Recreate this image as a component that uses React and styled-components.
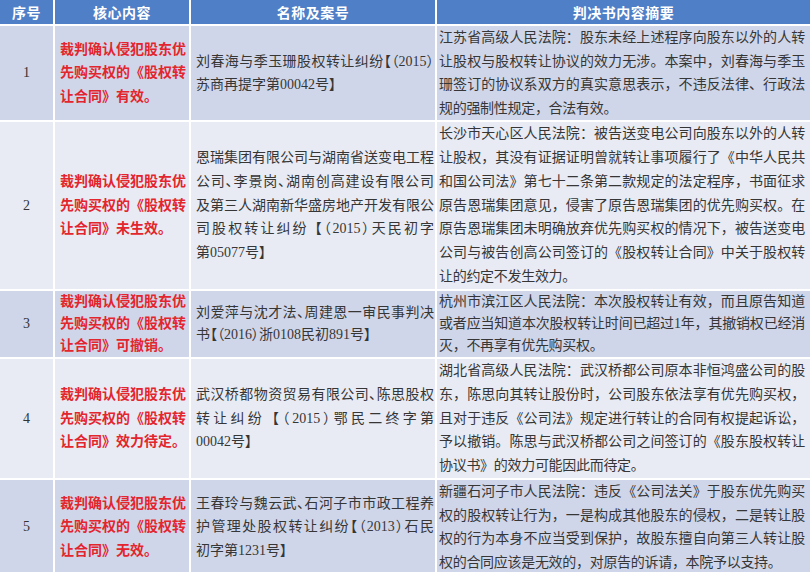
import React from 'react';
import styled, { createGlobalStyle } from 'styled-components';

const GlobalStyle = createGlobalStyle`
  html, body { margin: 0; padding: 0; background: #ffffff; }
  body { width: 810px; height: 572px; overflow: hidden; }
`;

const FONT = `"Liberation Serif", "Noto Sans CJK SC", serif`;

const Table = styled.div`
  width: 810px;
  height: 572px;
  display: flex;
  flex-direction: column;
  gap: 2px;
  background: #ffffff;
  font-family: ${FONT};
  overflow: hidden;
`;

const Row = styled.div`
  flex: none;
  display: grid;
  grid-template-columns: 53px 134px 244px 1fr;
  column-gap: 2px;
  height: ${(p) => p.$h}px;
`;

const HeadCell = styled.div`
  background: #4f7fc6;
  color: #ffffff;
  font-family: "Noto Sans CJK SC", sans-serif;
  font-weight: 700;
  font-size: 14px;
  letter-spacing: 0.5px;
  display: flex;
  align-items: center;
  justify-content: center;
`;

const Cell = styled.div`
  background: ${(p) => (p.$band ? '#d0d6ea' : '#e8ebf4')};
  display: flex;
  align-items: center;
  min-width: 0;
`;

const NumCell = styled(Cell)`
  justify-content: center;
  font-size: 14px;
  color: #333333;
`;

const CoreCell = styled(Cell)`
  padding-left: 5px;
`;

const NameCell = styled(Cell)`
  padding-left: 5px;
`;

const SummaryCell = styled(Cell)`
  padding-left: 2px;
`;

const Lines = styled.div`
  width: ${(p) => p.$w}px;
  font-size: 14px;
  line-height: ${(p) => p.$lh}px;
  color: ${(p) => (p.$red ? '#e3252d' : '#363636')};
  font-weight: ${(p) => (p.$red ? 700 : 400)};
  font-feature-settings: ${(p) => (p.$palt ? '"palt"' : 'normal')};
  letter-spacing: ${(p) => (p.$tight ? '-0.3px' : 'normal')};
`;

const Line = styled.div`
  text-align: justify;
  text-align-last: ${(p) => (p.$last ? 'left' : 'justify')};
`;

const rows = [
  {
    no: '1',
    h: 94,
    lh: 23.5,
    core: ['裁判确认侵犯股东优', '先购买权的《股权转', '让合同》有效。'],
    name: ['刘春海与季玉珊股权转让纠纷【（2015）', '苏商再提字第00042号】'],
    summary: [
      '江苏省高级人民法院：股东未经上述程序向股东以外的人转',
      '让股权与股权转让协议的效力无涉。本案中，刘春海与季玉',
      '珊签订的协议系双方的真实意思表示，不违反法律、行政法',
      '规的强制性规定，合法有效。',
    ],
  },
  {
    no: '2',
    h: 167,
    lh: 23.8,
    core: ['裁判确认侵犯股东优', '先购买权的《股权转', '让合同》未生效。'],
    name: [
      '恩瑞集团有限公司与湖南省送变电工程',
      '公司、李景岗、湖南创高建设有限公司',
      '及第三人湖南新华盛房地产开发有限公',
      '司股权转让纠纷 【（2015）天民初字',
      '第05077号】',
    ],
    summary: [
      '长沙市天心区人民法院：被告送变电公司向股东以外的人转',
      '让股权，其没有证据证明曾就转让事项履行了《中华人民共',
      '和国公司法》第七十二条第二款规定的法定程序，书面征求',
      '原告恩瑞集团意见，侵害了原告恩瑞集团的优先购买权。在',
      '原告恩瑞集团未明确放弃优先购买权的情况下，被告送变电',
      '公司与被告创高公司签订的《股权转让合同》中关于股权转',
      '让的约定不发生效力。',
    ],
  },
  {
    no: '3',
    h: 66,
    lh: 22,
    core: ['裁判确认侵犯股东优', '先购买权的《股权转', '让合同》可撤销。'],
    name: ['刘爱萍与沈才法、周建恩一审民事判决', '书【（2016）浙0108民初891号】'],
    summary: [
      '杭州市滨江区人民法院：本次股权转让有效，而且原告知道',
      '或者应当知道本次股权转让时间已超过1年，其撤销权已经消',
      '灭，不再享有优先购买权。',
    ],
  },
  {
    no: '4',
    h: 119,
    lh: 23.8,
    core: ['裁判确认侵犯股东优', '先购买权的《股权转', '让合同》效力待定。'],
    name: ['武汉桥都物资贸易有限公司、陈思股权', '转让纠纷 【（2015）鄂民二终字第', '00042号】'],
    summary: [
      '湖北省高级人民法院：武汉桥都公司原本非恒鸿盛公司的股',
      '东，陈思向其转让股份时，公司股东依法享有优先购买权，',
      '且对于违反《公司法》规定进行转让的合同有权提起诉讼，',
      '予以撤销。陈思与武汉桥都公司之间签订的《股东股权转让',
      '协议书》的效力可能因此而待定。',
    ],
  },
  {
    no: '5',
    h: 92,
    lh: 23.5,
    core: ['裁判确认侵犯股东优', '先购买权的《股权转', '让合同》无效。'],
    name: ['王春玲与魏云武、石河子市市政工程养', '护管理处股权转让纠纷【（2013）石民', '初字第1231号】'],
    summary: [
      '新疆石河子市人民法院：违反《公司法关》于股东优先购买',
      '权的股权转让行为，一是构成其他股东的侵权，二是转让股',
      '权的行为本身不应当受到保护，故股东擅自向第三人转让股',
      '权的合同应该是无效的，对原告的诉请，本院予以支持。',
    ],
  },
];

function TextLines({ lines, w, lh, red, palt, tight }) {
  return (
    <Lines $w={w} $lh={lh} $red={red} $palt={palt} $tight={tight}>
      {lines.map((l, i) => (
        <Line key={i} $last={i === lines.length - 1}>
          {l}
        </Line>
      ))}
    </Lines>
  );
}

export default function App() {
  return (
    <>
      <GlobalStyle />
      <Table>
        <Row $h={24}>
          <HeadCell>序号</HeadCell>
          <HeadCell>核心内容</HeadCell>
          <HeadCell>名称及案号</HeadCell>
          <HeadCell>判决书内容摘要</HeadCell>
        </Row>
        {rows.map((r, i) => {
          const band = i % 2 === 0;
          return (
            <Row key={r.no} $h={r.h}>
              <NumCell $band={band}>{r.no}</NumCell>
              <CoreCell $band={band}>
                <TextLines lines={r.core} w={126} lh={r.lh} red />
              </CoreCell>
              <NameCell $band={band}>
                <TextLines lines={r.name} w={238} lh={r.lh} palt />
              </NameCell>
              <SummaryCell $band={band}>
                <TextLines lines={r.summary} w={366} lh={r.lh} tight />
              </SummaryCell>
            </Row>
          );
        })}
      </Table>
    </>
  );
}
